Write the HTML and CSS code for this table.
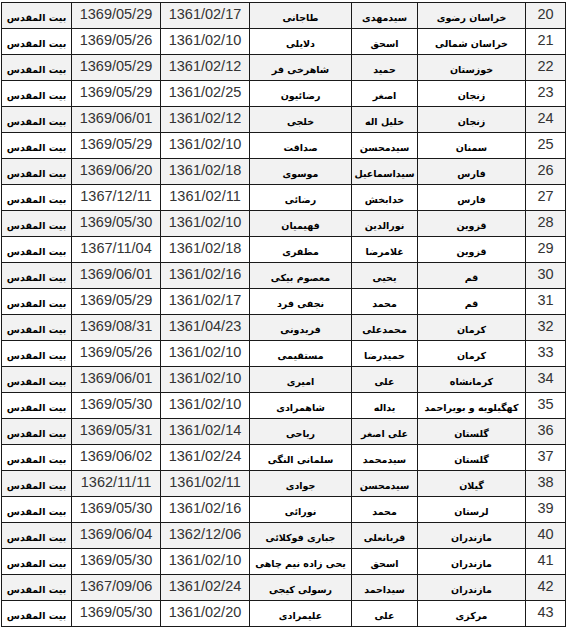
FILE: index.html
```html
<!DOCTYPE html>
<html lang="fa">
<head>
<meta charset="utf-8">
<link rel="stylesheet" href="styles.css">
</head>
<body>
<table class="grid" dir="rtl">
<colgroup>
<col class="c-num"><col class="c-prov"><col class="c-first"><col class="c-last"><col class="c-date"><col class="c-date"><col class="c-city">
</colgroup>
<tbody>
<tr><td class="num">20</td><td class="fa">خراسان رضوی</td><td class="fa">سیدمهدی</td><td class="fa">طاجانی</td><td class="date">1361/02/17</td><td class="date">1369/05/29</td><td class="fa">بیت المقدس</td></tr>
<tr><td class="num">21</td><td class="fa">خراسان شمالی</td><td class="fa">اسحق</td><td class="fa">دلایلی</td><td class="date">1361/02/10</td><td class="date">1369/05/26</td><td class="fa">بیت المقدس</td></tr>
<tr><td class="num">22</td><td class="fa">خوزستان</td><td class="fa">حمید</td><td class="fa">شاهرخی فر</td><td class="date">1361/02/12</td><td class="date">1369/05/29</td><td class="fa">بیت المقدس</td></tr>
<tr><td class="num">23</td><td class="fa">زنجان</td><td class="fa">اصغر</td><td class="fa">رضائیون</td><td class="date">1361/02/25</td><td class="date">1369/05/29</td><td class="fa">بیت المقدس</td></tr>
<tr><td class="num">24</td><td class="fa">زنجان</td><td class="fa">خلیل اله</td><td class="fa">خلجی</td><td class="date">1361/02/12</td><td class="date">1369/06/01</td><td class="fa">بیت المقدس</td></tr>
<tr><td class="num">25</td><td class="fa">سمنان</td><td class="fa">سیدمحسن</td><td class="fa">صداقت</td><td class="date">1361/02/10</td><td class="date">1369/05/29</td><td class="fa">بیت المقدس</td></tr>
<tr><td class="num">26</td><td class="fa">فارس</td><td class="fa">سیداسماعیل</td><td class="fa">موسوی</td><td class="date">1361/02/18</td><td class="date">1369/06/20</td><td class="fa">بیت المقدس</td></tr>
<tr><td class="num">27</td><td class="fa">فارس</td><td class="fa">خدابخش</td><td class="fa">رضائی</td><td class="date">1361/02/11</td><td class="date">1367/12/11</td><td class="fa">بیت المقدس</td></tr>
<tr><td class="num">28</td><td class="fa">قزوین</td><td class="fa">نورالدین</td><td class="fa">فهیمیان</td><td class="date">1361/02/10</td><td class="date">1369/05/30</td><td class="fa">بیت المقدس</td></tr>
<tr><td class="num">29</td><td class="fa">قزوین</td><td class="fa">غلامرضا</td><td class="fa">مظفری</td><td class="date">1361/02/18</td><td class="date">1367/11/04</td><td class="fa">بیت المقدس</td></tr>
<tr><td class="num">30</td><td class="fa">قم</td><td class="fa">یحیی</td><td class="fa">معصوم بیکی</td><td class="date">1361/02/16</td><td class="date">1369/06/01</td><td class="fa">بیت المقدس</td></tr>
<tr><td class="num">31</td><td class="fa">قم</td><td class="fa">محمد</td><td class="fa">نجفی فرد</td><td class="date">1361/02/17</td><td class="date">1369/05/29</td><td class="fa">بیت المقدس</td></tr>
<tr><td class="num">32</td><td class="fa">کرمان</td><td class="fa">محمدعلی</td><td class="fa">فریدونی</td><td class="date">1361/04/23</td><td class="date">1369/08/31</td><td class="fa">بیت المقدس</td></tr>
<tr><td class="num">33</td><td class="fa">کرمان</td><td class="fa">حمیدرضا</td><td class="fa">مستقیمی</td><td class="date">1361/02/10</td><td class="date">1369/05/26</td><td class="fa">بیت المقدس</td></tr>
<tr><td class="num">34</td><td class="fa">کرمانشاه</td><td class="fa">علی</td><td class="fa">امیری</td><td class="date">1361/02/10</td><td class="date">1369/06/01</td><td class="fa">بیت المقدس</td></tr>
<tr><td class="num">35</td><td class="fa">کهگیلویه و بویراحمد</td><td class="fa">یداله</td><td class="fa">شاهمرادی</td><td class="date">1361/02/10</td><td class="date">1369/05/30</td><td class="fa">بیت المقدس</td></tr>
<tr><td class="num">36</td><td class="fa">گلستان</td><td class="fa">علی اصغر</td><td class="fa">ریاحی</td><td class="date">1361/02/14</td><td class="date">1369/05/31</td><td class="fa">بیت المقدس</td></tr>
<tr><td class="num">37</td><td class="fa">گلستان</td><td class="fa">سیدمحمد</td><td class="fa">سلمانی النگی</td><td class="date">1361/02/24</td><td class="date">1369/06/02</td><td class="fa">بیت المقدس</td></tr>
<tr><td class="num">38</td><td class="fa">گیلان</td><td class="fa">سیدمحسن</td><td class="fa">جوادی</td><td class="date">1361/02/11</td><td class="date">1362/11/11</td><td class="fa">بیت المقدس</td></tr>
<tr><td class="num">39</td><td class="fa">لرستان</td><td class="fa">محمد</td><td class="fa">نورائی</td><td class="date">1361/02/16</td><td class="date">1369/05/30</td><td class="fa">بیت المقدس</td></tr>
<tr><td class="num">40</td><td class="fa">مازندران</td><td class="fa">قربانعلی</td><td class="fa">جباری فوکلائی</td><td class="date">1362/12/06</td><td class="date">1369/06/04</td><td class="fa">بیت المقدس</td></tr>
<tr><td class="num">41</td><td class="fa">مازندران</td><td class="fa">اسحق</td><td class="fa">یحی زاده نیم چاهی</td><td class="date">1361/02/10</td><td class="date">1369/05/30</td><td class="fa">بیت المقدس</td></tr>
<tr><td class="num">42</td><td class="fa">مازندران</td><td class="fa">سیداحمد</td><td class="fa">رسولی کیجی</td><td class="date">1361/02/24</td><td class="date">1367/09/06</td><td class="fa">بیت المقدس</td></tr>
<tr><td class="num">43</td><td class="fa">مرکزی</td><td class="fa">علی</td><td class="fa">علیمرادی</td><td class="date">1361/02/20</td><td class="date">1369/05/30</td><td class="fa">بیت المقدس</td></tr>
</tbody>
</table>
</body>
</html>
```

FILE: styles.css
```css
html, body {
  margin: 0;
  padding: 0;
  background: #ffffff;
}

body {
  padding: 2px 0 0 1px;
}

.grid {
  border-collapse: collapse;
  table-layout: fixed;
  width: 565px;
  font-family: "Liberation Sans", Arial, sans-serif;
}

.c-num { width: 40px; }
.c-prov { width: 108px; }
.c-first { width: 66px; }
.c-last { width: 102px; }
.c-date { width: 89px; }
.c-city { width: 70px; }

.grid td {
  border: 1px solid #1a1a1a;
  height: 26px;
  padding: 0;
  text-align: center;
  white-space: nowrap;
  box-sizing: border-box;
}

.grid tr:nth-child(odd) td {
  background: #f2f2f2;
}

.grid td.num,
.grid td.date {
  font-size: 14.5px;
  color: #333333;
  vertical-align: middle;
  padding-bottom: 3px;
}

.grid td.fa {
  font-family: "DejaVu Sans", sans-serif;
  font-weight: bold;
  font-size: 9.5px;
  color: #000000;
  vertical-align: middle;
  padding-top: 3px;
}

.grid td.fa.tight {
  letter-spacing: -0.2px;
}
```
